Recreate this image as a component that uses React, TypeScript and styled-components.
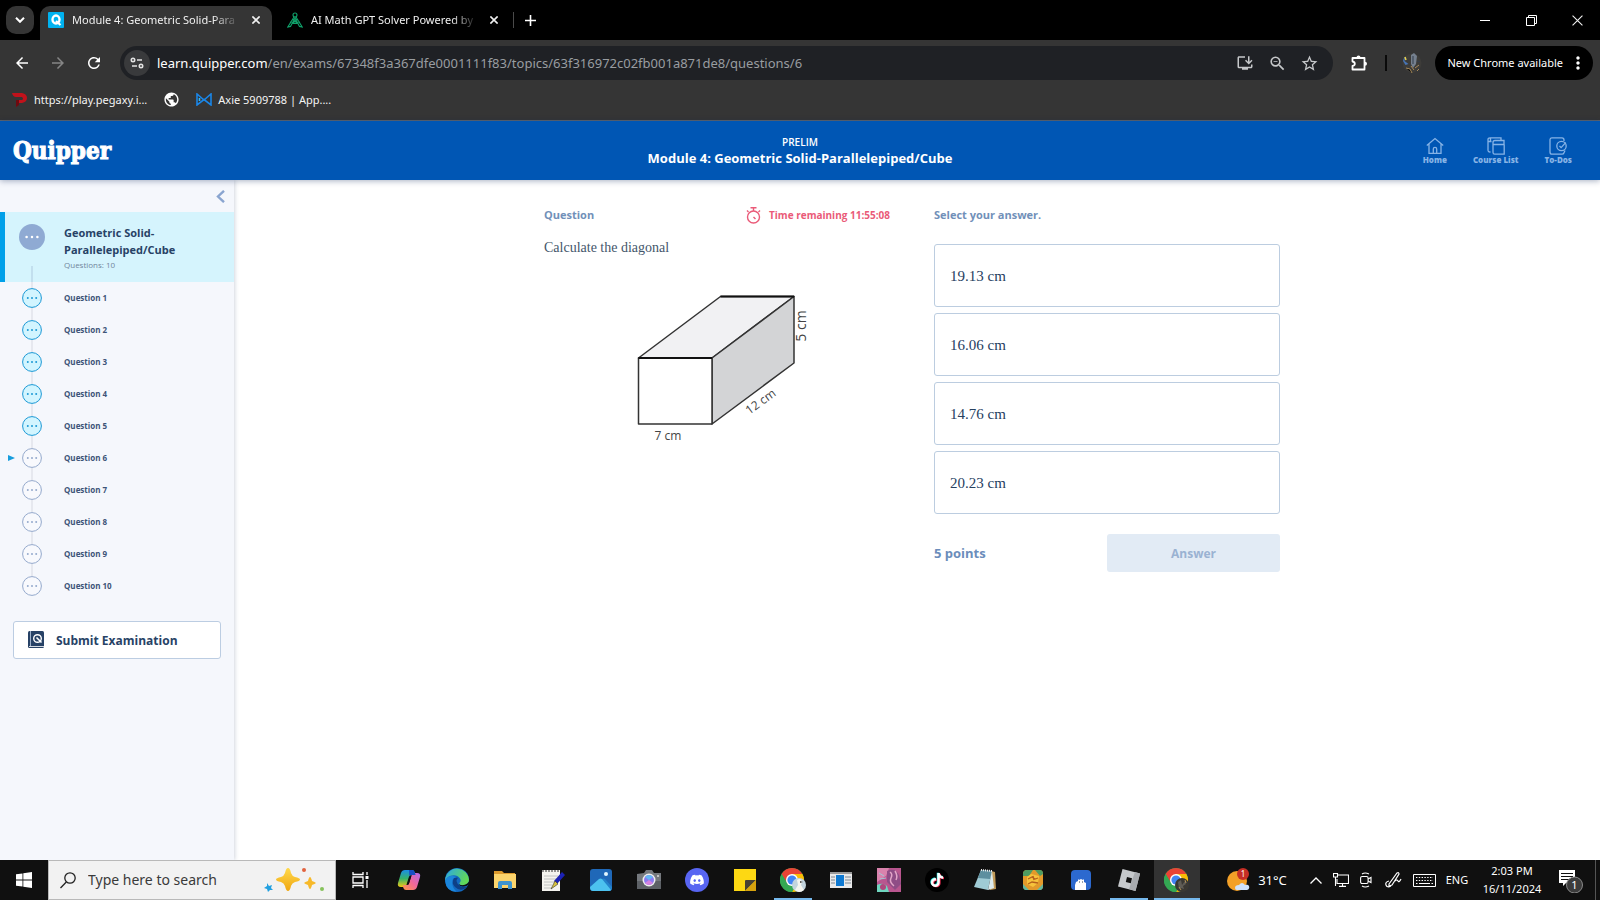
import React from "react";
import styled, { createGlobalStyle } from "styled-components";
import {
  MdArrowBack,
  MdArrowForward,
  MdRefresh,
  MdInstallDesktop,
  MdZoomOut,
  MdStarBorder,
  MdMoreVert,
  MdPublic,
} from "react-icons/md";
import { FaDiscord, FaTiktok } from "react-icons/fa";

const GlobalStyle = createGlobalStyle`
  * { box-sizing: border-box; }
  body { margin: 0; background: #fff; font-family: "Open Sans", "Noto Sans", sans-serif; }
  button, input { font: inherit; color: inherit; }
  button { border: 0; padding: 0; background: none; cursor: pointer; }
  ul, ol { list-style: none; margin: 0; padding: 0; }
  h1, h2, h3, p { margin: 0; }
  a { color: inherit; text-decoration: none; }
  svg { display: block; flex: none; }
`;

const Shell = styled.div`
  min-height: 100vh;
  display: flex;
  flex-direction: column;
`;

/* ---------- browser window ---------- */
const ChromeFont = `"Noto Sans", "Open Sans", sans-serif`;

const TabStrip = styled.div`
  height: 40px;
  padding-left: 6px;
  background: #000;
  color: #f0f0f0;
  font: 11px/16px ${ChromeFont};
  display: flex;
  align-items: center;
`;

const TabSearch = styled.button`
  width: 28px;
  height: 28px;
  margin-right: 6px;
  border-radius: 10px;
  background: #353535;
  display: grid;
  place-items: center;
`;

const Tab = styled.div<{ $active?: boolean }>`
  align-self: flex-end;
  width: ${(p) => (p.$active ? 232 : 241)}px;
  height: 34px;
  padding: 0 ${(p) => (p.$active ? 8 : 11)}px 6px ${(p) => (p.$active ? 8 : 15)}px;
  border-radius: 10px 10px 0 0;
  background: ${(p) => (p.$active ? "#353535" : "transparent")};
  display: flex;
  align-items: center;
  gap: 8px;
`;

const TabTitle = styled.button`
  flex: 1;
  min-width: 0;
  height: 20px;
  white-space: nowrap;
  text-align: left;
  mask-image: linear-gradient(to right, #000 84%, transparent);
`;

const IconButton = styled.button<{ $w?: number }>`
  width: ${(p) => p.$w ?? 16}px;
  height: 28px;
  display: grid;
  place-items: center;
  flex: none;
`;

const StripDivider = styled.span`
  width: 1px;
  height: 16px;
  background: #4a4a4a;
  margin-right: 8px;
`;

const WindowButtons = styled.div`
  margin-left: auto;
  display: flex;
`;

const Toolbar = styled.div`
  height: 46px;
  padding: 0 7px;
  background: #353535;
  color: #fff;
  display: flex;
  align-items: center;
`;

const NavButtons = styled.div`
  display: flex;
  gap: 6px;
  margin-right: 11px;
`;

const UrlBar = styled.form`
  flex: 1;
  height: 34px;
  padding: 0 8px 0 4px;
  border-radius: 17px;
  background: #1f2125;
  display: flex;
  align-items: center;
  font: 13px/20px ${ChromeFont};
`;

const SiteInfo = styled.button`
  width: 26px;
  height: 26px;
  margin-right: 7px;
  border-radius: 50%;
  background: #393a3c;
  display: grid;
  place-items: center;
`;

const UrlPath = styled.input`
  flex: 1;
  min-width: 0;
  padding: 0;
  border: 0;
  outline: 0;
  background: transparent;
  color: #999da1;
`;

const UrlActions = styled.div`
  display: flex;
  color: #c6c8ca;
`;

const ToolDivider = styled.span`
  width: 2px;
  height: 16px;
  margin-right: 15px;
  background: #0a0a0a;
`;

const UpdateChip = styled.button`
  height: 34px;
  margin-left: 13px;
  padding: 0 5px 0 12px;
  border-radius: 17px;
  background: #000;
  font: 11px/16px ${ChromeFont};
  display: flex;
  align-items: center;
  gap: 5px;
`;

const Bookmarks = styled.nav`
  height: 35px;
  padding: 0 12px 7px;
  background: #353535;
  border-bottom: 1px solid #5b6470;
  color: #f4f4f4;
  font: 11px/16px ${ChromeFont};
  display: flex;
  align-items: center;
  gap: 16px;
`;

const Bookmark = styled.a`
  display: flex;
  align-items: center;
  gap: 6px;
`;

/* ---------- course page ---------- */
const Header = styled.header`
  position: relative;
  z-index: 1;
  height: 59px;
  background: #0056b4;
  box-shadow: 0 1px 6px rgba(0, 30, 80, 0.35);
  color: #fff;
  display: grid;
  grid-template-columns: 1fr auto 1fr;
  align-items: center;
`;

const Logo = styled.a`
  padding-left: 13px;
  font: bold 24px/32px "DejaVu Serif Condensed", "DejaVu Serif", serif;
  -webkit-text-stroke: 1px #fff;
`;

const HeaderTitle = styled.div`
  text-align: center;
  p { font-size: 10px; line-height: 16px; font-weight: 600; }
  h1 { font-size: 13px; line-height: 17px; font-weight: 700; }
`;

const HeaderNav = styled.nav`
  justify-self: end;
  padding-right: 28px;
  display: flex;
  gap: 26px;
`;

const HeaderLink = styled.a`
  color: #86b3e6;
  font-size: 8px;
  line-height: 10px;
  font-weight: 800;
  display: flex;
  flex-direction: column;
  align-items: center;
`;

const Page = styled.div`
  flex: 1;
  display: flex;
`;

const Sidebar = styled.aside`
  width: 234px;
  flex: none;
  background: #f5f7fc;
  box-shadow: 1px 0 4px rgba(30, 50, 90, 0.2);
`;

const CollapseRow = styled.div`
  height: 32px;
  padding: 0 6px;
  display: flex;
  justify-content: flex-end;
  align-items: center;
`;

const Topic = styled.div`
  height: 70px;
  padding: 12px 8px 0 14px;
  border-left: 5px solid #00a0e9;
  background: #d5f4fd;
  display: flex;
  gap: 19px;
  h2 { font-size: 11px; line-height: 17px; color: #274266; }
  p { font-size: 8px; line-height: 14px; color: #71869c; }
`;

const TopicMark = styled.div`
  width: 26px;
  display: flex;
  flex-direction: column;
  justify-content: space-between;
  align-items: center;
`;

const Thread = styled.span`
  width: 2px;
  height: 16px;
  background: rgba(120, 140, 180, 0.2);
`;

const QuestionRow = styled.li`
  height: 32px;
  display: grid;
  grid-template-columns: 22px 20px 1fr;
  align-items: start;
`;

const Pointer = styled.span`
  padding: 12px 0 0 8px;
`;

const Step = styled.div<{ $last?: boolean }>`
  height: 32px;
  padding-top: 6px;
  background: linear-gradient(#e6e8ef, #e6e8ef) top center / 2px ${(p) => (p.$last ? "8px" : "100%")} no-repeat;
`;

const QuestionLink = styled.a`
  padding-left: 22px;
  font-size: 8px;
  line-height: 32px;
  font-weight: 700;
  color: #3d5478;
`;

const SubmitButton = styled.button`
  width: calc(100% - 26px);
  height: 38px;
  margin: 19px 13px 0;
  padding-left: 14px;
  border: 1px solid #bccde2;
  border-radius: 3px;
  background: #fff;
  color: #274266;
  font-size: 12px;
  font-weight: 700;
  display: flex;
  align-items: center;
  gap: 12px;
`;

const Main = styled.main`
  flex: 1;
  padding: 23px 10px 0 0;
`;

const Columns = styled.div`
  max-width: 736px;
  margin: 0 auto;
  display: grid;
  grid-template-columns: 1fr 1fr;
  column-gap: 44px;
`;

const PanelHead = styled.div`
  height: 24px;
  display: flex;
  justify-content: space-between;
  align-items: center;
  color: #7190b9;
  h2 { font-size: 11px; line-height: 20px; }
`;

const Timer = styled.div`
  display: flex;
  align-items: center;
  gap: 8px;
  color: #ea5a78;
  font-size: 10px;
  font-weight: 700;
`;

const Prompt = styled.p`
  margin-top: 11px;
  font: 14px/20px "Liberation Serif", serif;
  color: #44566b;
`;

const Figure = styled.svg`
  margin: 30px 0 0 86px;
  font-family: "Open Sans", sans-serif;
`;

const Options = styled.div`
  margin-top: 17px;
  display: flex;
  flex-direction: column;
  gap: 6px;
`;

const Option = styled.button`
  height: 63px;
  padding: 0 15px;
  border: 1px solid #bccde0;
  border-radius: 3px;
  background: #fff;
  color: #26405f;
  text-align: left;
  font: 15px/20px "Liberation Serif", serif;
`;

const AnswerRow = styled.div`
  margin-top: 20px;
  display: grid;
  grid-template-columns: 1fr 1fr;
  align-items: center;
`;

const Points = styled.strong`
  font-size: 13px;
  color: #6b8dbb;
`;

const AnswerButton = styled.button`
  height: 38px;
  border-radius: 3px;
  background: #e2ebf5;
  color: #9ab2d2;
  font-size: 12px;
  font-weight: 700;
`;

/* ---------- desktop taskbar ---------- */
const Taskbar = styled.footer`
  height: 40px;
  background: #101010;
  color: #fff;
  display: flex;
`;

const StartButton = styled.button`
  width: 48px;
  display: grid;
  place-items: center;
`;

const SearchBox = styled.label`
  width: 288px;
  padding: 0 10px 0 11px;
  border: 1px solid #b9b9b9;
  background: #f2f2f2;
  display: flex;
  align-items: center;
  gap: 12px;
  input {
    flex: 1;
    min-width: 0;
    padding: 0;
    border: 0;
    outline: 0;
    background: transparent;
    font: 14px/20px ${ChromeFont};
  }
  input::placeholder { color: #3a3a3a; opacity: 1; }
`;

const Apps = styled.div`
  padding-left: 1px;
  display: flex;
`;

const AppButton = styled.button<{ $open?: boolean; $active?: boolean }>`
  width: 48px;
  display: grid;
  place-items: center;
  background:
    linear-gradient(#76b9ed, #76b9ed) bottom center / ${(p) => (p.$active ? "46px" : p.$open ? "38px" : "0")} 2px no-repeat,
    linear-gradient(#333, #333) center / ${(p) => (p.$active ? "46px" : "0")} 100% no-repeat;
`;

const Tray = styled.div`
  margin-left: auto;
  padding-right: 4px;
  display: flex;
  align-items: center;
  font: 11px/18px ${ChromeFont};
`;

const TrayButton = styled.button<{ $w: number }>`
  width: ${(p) => p.$w}px;
  height: 40px;
  display: flex;
  align-items: center;
  justify-content: center;
  gap: 7px;
`;

const Temperature = styled.span`
  font-size: 13px;
`;

const Clock = styled.time`
  width: 76px;
  text-align: center;
`;

const ShowDesktop = styled.span`
  width: 1px;
  height: 40px;
  margin-left: 5px;
  background: #555;
`;

/* ---------- icons ---------- */
const Cross = ({ size = 8, width = 2 }: { size?: number; width?: number }) => (
  <svg width={size} height={size} viewBox="0 0 10 10" stroke="currentColor" strokeWidth={width}>
    <path d="M.5.5l9 9M9.5.5l-9 9" />
  </svg>
);

const Dots = ({ color, size }: { color: string; size: number }) => (
  <g fill={color}>
    {[-1, 0, 1].map((i) => (
      <circle key={i} cx={i * size * 3} cy="0" r={size * 0.7} />
    ))}
  </g>
);

const ChromeLogo = ({ person }: { person: "light" | "dark" }) => (
  <svg width="26" height="26" viewBox="0 0 26 26">
    <circle cx="12" cy="13" r="12" fill="#34a853" />
    <path d="M1.6 7A12 12 0 0 1 22.4 7H12l-5 9z" fill="#ea4335" />
    <path d="M22.4 7A12 12 0 0 1 12 25l5.2-9L12 7z" fill="#fbbc05" />
    <path d="M1.6 7A12 12 0 0 0 12 25l5-8.5L7 16z" fill="#34a853" />
    <circle cx="12" cy="13" r="6" fill="#fff" />
    <circle cx="12" cy="13" r="4.6" fill="#4285f4" />
    {person === "light" ? (
      <g>
        <circle cx="19" cy="18" r="7" fill="#c3d4dd" />
        <path d="M17 13q4-3 5 2l-1 3 3 5q-5 4-9 0l3-5z" fill="#f5f5ef" />
        <path d="M20 14l3 1-3 1z" fill="#444" />
      </g>
    ) : (
      <g>
        <circle cx="18" cy="18" r="7" fill="#3a3833" />
        <path d="M14 15l3-2 1 5 3-4 1 3-3 2 1 3-3-1-2 1z" fill="#5f5c55" />
        <path d="M15 20l2 3M21 13l1 3" stroke="#b09057" />
      </g>
    )}
  </svg>
);

const taskbarApps: { name: string; open?: boolean; active?: boolean; icon: React.ReactNode }[] = [
  {
    name: "Task View",
    icon: (
      <svg width="18" height="16" viewBox="0 0 18 16" fill="none" stroke="#fff" strokeWidth="1.3">
        <path d="M1 0v2.500h10V0M1 16v-2.500h10V16M1 5h10v6H1zM15 0v3M15 8v8" />
        <path d="M13.500 4h3v3h-3z" fill="#fff" stroke="none" />
      </svg>
    ),
  },
  {
    name: "Copilot",
    icon: (
      <svg width="24" height="24" viewBox="0 0 24 24">
        <defs>
          <linearGradient id="cpA" x1="0" y1="0" x2="0" y2="1">
            <stop stopColor="#1a8fe8" />
            <stop offset=".5" stopColor="#35b36b" />
            <stop offset="1" stopColor="#f2c811" />
          </linearGradient>
          <linearGradient id="cpB" x1="1" y1="0" x2="0" y2="1">
            <stop stopColor="#b06be8" />
            <stop offset=".5" stopColor="#f0679a" />
            <stop offset="1" stopColor="#ff9b44" />
          </linearGradient>
        </defs>
        <path d="M8 2h7q2 0 2.600 2l1 3h-4q-2 0-2.700 2l-2.500 8q-.7 2-2.500 2H4q-4 0-3-4l3-10q1-3 4-3z" fill="url(#cpA)" />
        <path d="M16 22H9q-2 0-2.600-2l-.8-3h4q2 0 2.600-2l2.500-8q.7-2 2.500-2H20q4 0 3 4l-3 10q-1 3-4 3z" fill="url(#cpB)" />
        <path d="M12 2h3q2 0 2.600 2l1 3h-4q-1.600 0-2.300 1.300z" fill="#174fc4" />
        <path d="M12.500 8.500l-2.500 8.500q1.500 0 2-1.500l2.300-7.500z" fill="#101010" />
      </svg>
    ),
  },
  {
    name: "Edge",
    icon: (
      <svg width="24" height="24" viewBox="0 0 24 24">
        <defs>
          <linearGradient id="edA" x1="0" y1="0" x2="1" y2=".4">
            <stop stopColor="#2aa7e8" />
            <stop offset="1" stopColor="#62d957" />
          </linearGradient>
        </defs>
        <circle cx="12" cy="12" r="12" fill="#1268c0" />
        <path d="M.3 10A12 12 0 0 1 24 12q-.5 5-6 5-4 0-3.500-2 2-2 .5-4.500Q12 6.500 7 7.500 2 8 .3 13z" fill="url(#edA)" />
        <path d="M9 10q-3 5 1 9t9 2q2-.8 3.500-2.800Q18 20 15 18t-3.500-5q0-2 1.500-3-2-1.500-4 0z" fill="#0e3f86" />
        <path d="M.3 13Q2 7.500 7.500 8q3 .2 4.500 1.700Q8 9 7.300 13q-.8 6 4.200 10.800Q1 23.500.3 13z" fill="#1b86dc" />
        <path d="M24 15.500q-2 3.500-6.500 3-3-.5-4-2.500 3 2 6.500.8 2.500-.8 4-3z" fill="#101010" />
      </svg>
    ),
  },
  {
    name: "File Explorer",
    icon: (
      <svg width="22" height="20" viewBox="0 0 22 20">
        <path d="M0 1h8l2 2h11v4H0z" fill="#dc9a2d" />
        <path d="M0 4h22v14H0z" fill="#fbd46c" />
        <path d="M4 19v-6q0-2 2-2h10q2 0 2 2v6h-4v-4H8v4z" fill="#3e94cf" />
      </svg>
    ),
  },
  {
    name: "Notes",
    icon: (
      <svg width="24" height="24" viewBox="0 0 24 24">
        <path d="M1 2h18v21H1z" fill="#f4f3ee" />
        <path d="M2 2v2m3-2v2m3-2v2m3-2v2m3-2v2m3-2v2" stroke="#333" />
        <path d="M3 8h14M3 11h14M3 14h12M3 17h8M3 20h8" stroke="#b5b5b5" strokeWidth=".8" />
        <path d="M21 4l3 3-8 9-3-3z" fill="#1b21b4" />
        <path d="M14 13l3 3-7 5z" fill="#d8c23c" stroke="#333" strokeWidth=".6" />
      </svg>
    ),
  },
  {
    name: "Photos",
    icon: (
      <svg width="22" height="22" viewBox="0 0 22 22">
        <rect width="22" height="22" rx="3" fill="#1f68b8" />
        <path d="M5 22l7-12q1.500-1 3 0l7 8q0 4-3 4z" fill="#2383cc" />
        <path d="M0 18l9-8q1.500-1 3 0l9 11q-1 1-2 1H3q-3 0-3-4z" fill="#4cc2ef" />
        <circle cx="16" cy="5" r="2" fill="#e3f6ff" />
      </svg>
    ),
  },
  {
    name: "Camera",
    icon: (
      <svg width="24" height="20" viewBox="0 0 24 20">
        <path d="M7 3l2-3h6l2 3h7v16H0V4z" fill="#75797e" />
        <path d="M0 11h24v8H0z" fill="#5d6166" />
        <circle cx="12" cy="10" r="6.500" fill="#eee" />
        <circle cx="12" cy="10" r="5" fill="#8a7bf0" />
        <path d="M8 7a5 5 0 0 1 8 0l-4 3z" fill="#64b8f5" />
        <path d="M8 13a5 5 0 0 0 8 0l-4-3z" fill="#d583e0" />
        <circle cx="21" cy="6" r="1" fill="#ddd" />
      </svg>
    ),
  },
  {
    name: "Discord",
    icon: (
      <svg width="24" height="24" viewBox="0 0 24 24">
        <circle cx="12" cy="12" r="12" fill="#5865f2" />
        <g color="#fff" transform="translate(4.500 4.500)">
          <FaDiscord size={15} />
        </g>
      </svg>
    ),
  },
  {
    name: "Sticky Notes",
    icon: (
      <svg width="22" height="22" viewBox="0 0 22 22">
        <path d="M0 0h22v22H0z" fill="#fdd813" />
        <path d="M11 22V12q0-1 1-1h10z" fill="#474133" />
        <path d="M11 22L22 11v11z" fill="#d6a20d" />
      </svg>
    ),
  },
  { name: "Chrome", open: true, icon: <ChromeLogo person="light" /> },
  {
    name: "News",
    icon: (
      <svg width="22" height="16" viewBox="0 0 22 16">
        <path d="M0 0h22v16H0z" fill="#e9e9e9" />
        <path d="M0 0h22v2H0z" fill="#999" />
        <path d="M6 3h8v11H6z" fill="#0f79d1" />
        <path d="M1 5h4M1 8h4M1 11h4M15 5h6M15 8h6M15 11h6" stroke="#7d8792" />
      </svg>
    ),
  },
  {
    name: "Art",
    icon: (
      <svg width="24" height="24" viewBox="0 0 24 24">
        <path d="M0 0h24v24H0z" fill="#b9568f" />
        <path d="M0 0h12L9 8 0 14z" fill="#d983ad" />
        <path d="M10 3q8-4 12 4l2 9-6 6-8-8z" fill="#8f4d86" />
        <path d="M13 4q3 2 1 6t3 8M18 3q3 5 1 9" stroke="#e2a5c7" strokeWidth="1.500" fill="none" />
        <path d="M0 17q6-3 10 1l2 6H0z" fill="#6fd6bf" />
        <circle cx="6" cy="19" r="3" fill="#b0477e" />
        <path d="M2 5l5 3M3 11l6-1" stroke="#a1c8d6" />
      </svg>
    ),
  },
  {
    name: "TikTok",
    icon: (
      <svg width="24" height="24" viewBox="0 0 24 24">
        <circle cx="12" cy="12" r="12" fill="#000" />
        <g color="#25f4ee" transform="translate(4.400 4.400)"><FaTiktok size={14} /></g>
        <g color="#fe2c55" transform="translate(5.800 5.600)"><FaTiktok size={14} /></g>
        <g color="#fff" transform="translate(5 5)"><FaTiktok size={14} /></g>
      </svg>
    ),
  },
  {
    name: "Notepad",
    icon: (
      <svg width="24" height="22" viewBox="0 0 24 22">
        <path d="M18 2l4 1 1 17-6 1z" fill="#c09a58" />
        <path d="M8 1l11 1-4 19-14-3z" fill="#9fcbd5" />
        <path d="M8 1l11 1-2 8L5 9z" fill="#5d8f9f" />
        <path d="M19 2l2 17-6 2z" fill="#dcebed" />
        <path d="M8 1l11 1" stroke="#eee" strokeDasharray="1 1" strokeWidth="2" />
      </svg>
    ),
  },
  {
    name: "Game",
    icon: (
      <svg width="20" height="20" viewBox="0 0 20 20">
        <rect width="20" height="20" rx="4" fill="#e29a2b" />
        <path d="M0 4q0-4 4-4h6L6 6H0zM12 0h5q3 0 3 4l-3 2z" fill="#4e9c62" />
        <path d="M4 7l4-3 8 2-1 7-5 4-6-3z" fill="#f6c33c" />
        <path d="M5 9l4-2 3 2 3-1M5 14l4-2 6 1M10 6l1 4" stroke="#b5601c" strokeWidth="1.300" fill="none" />
        <path d="M0 14l6 6H3q-3 0-3-4zM20 14l-6 6h3q3 0 3-4z" fill="#63b7a0" />
      </svg>
    ),
  },
  {
    name: "Penguin",
    icon: (
      <svg width="20" height="20" viewBox="0 0 20 20">
        <rect width="20" height="20" rx="4" fill="#2c69cf" />
        <path d="M4 20v-5l1-3 2-1V9l1 1 2-1 2 1 1-1v3l2 1v7z" fill="#fff" />
        <path d="M8 12h1M11 12h1" stroke="#345" />
      </svg>
    ),
  },
  {
    name: "Roblox",
    open: true,
    icon: (
      <svg width="24" height="24" viewBox="0 0 24 24">
        <path d="M5.500 1L23 5.500 18.500 23 1 18.500z" fill="#c6c9cc" />
        <path d="M18 4l5 1.500L18.500 23 12 21z" fill="#a8abaf" />
        <path d="M10 9l5 1.200-1.200 5-5-1.200z" fill="#101010" />
      </svg>
    ),
  },
  { name: "Chrome window", active: true, icon: <ChromeLogo person="dark" /> },
];

const questions = Array.from({ length: 10 }, (_, i) => i + 1);
const answers = ["19.13 cm", "16.06 cm", "14.76 cm", "20.23 cm"];

export default function App() {
  return (
    <Shell>
      <GlobalStyle />
      <TabStrip>
        <TabSearch aria-label="Search tabs">
          <svg width="10" height="6" viewBox="0 0 10 6" fill="none" stroke="#fff" strokeWidth="2">
            <path d="M1 .8l4 4 4-4" />
          </svg>
        </TabSearch>
        <Tab $active>
          <svg width="16" height="16" viewBox="0 0 16 16">
            <rect width="16" height="16" rx="1" fill="#00b2f0" />
            <ellipse cx="8" cy="7.500" rx="3.500" ry="4" fill="none" stroke="#fff" strokeWidth="2.400" />
            <path d="M8 9l4.500 4" stroke="#fff" strokeWidth="2.200" />
          </svg>
          <TabTitle>Module 4: Geometric Solid-Para</TabTitle>
          <IconButton aria-label="Close tab"><Cross /></IconButton>
        </Tab>
        <Tab>
          <svg width="16" height="16" viewBox="0 0 16 16" fill="none" stroke="#10a26b" strokeWidth="1.100">
            <circle cx="8" cy="3" r="2" />
            <path d="M7 5L.8 15l2.700-.6L8 6l4.500 8.400 2.700.6L9 5M3 10q5 3 10 0M5.500 7.500l5.500 4M10.500 7.500l-5.500 4" />
          </svg>
          <TabTitle>AI Math GPT Solver Powered by</TabTitle>
          <IconButton aria-label="Close tab"><Cross /></IconButton>
        </Tab>
        <StripDivider />
        <IconButton aria-label="New tab">
          <svg width="11" height="11" viewBox="0 0 11 11" stroke="#fff" strokeWidth="1.600"><path d="M5.500 0v11M0 5.500h11" /></svg>
        </IconButton>
        <WindowButtons>
          <IconButton $w={46} aria-label="Minimize">
            <svg width="10" height="10" viewBox="0 0 10 10" stroke="#fff"><path d="M0 5.500h10" /></svg>
          </IconButton>
          <IconButton $w={46} aria-label="Restore">
            <svg width="11" height="11" viewBox="0 0 11 11" fill="none" stroke="#fff"><path d="M.5 2.500h8v8h-8zM2.500 2.500v-2h8v8h-2" /></svg>
          </IconButton>
          <IconButton $w={46} aria-label="Close"><Cross size={11} width={1} /></IconButton>
        </WindowButtons>
      </TabStrip>

      <Toolbar>
        <NavButtons>
          <IconButton $w={30} aria-label="Back"><MdArrowBack size={18} /></IconButton>
          <IconButton $w={30} aria-label="Forward"><MdArrowForward size={18} color="#858585" /></IconButton>
          <IconButton $w={30} aria-label="Reload"><MdRefresh size={18} /></IconButton>
        </NavButtons>
        <UrlBar>
          <SiteInfo type="button" aria-label="Site information">
            <svg width="14" height="12" viewBox="0 0 14 12" fill="none" stroke="#e3e3e3" strokeWidth="1.600">
              <circle cx="3" cy="3" r="1.700" />
              <path d="M7 3h5M2 9h5" />
              <circle cx="11" cy="9" r="1.700" />
            </svg>
          </SiteInfo>
          <span>learn.quipper.com</span>
          <UrlPath aria-label="Address" defaultValue="/en/exams/67348f3a367dfe0001111f83/topics/63f316972c02fb001a871de8/questions/6" />
          <UrlActions>
            <IconButton type="button" $w={32} aria-label="Install"><MdInstallDesktop size={18} /></IconButton>
            <IconButton type="button" $w={32} aria-label="Zoom"><MdZoomOut size={19} /></IconButton>
            <IconButton type="button" $w={32} aria-label="Bookmark"><MdStarBorder size={19} /></IconButton>
          </UrlActions>
        </UrlBar>
        <IconButton $w={52} aria-label="Extensions">
          <svg width="17" height="17" viewBox="0 0 17 17" fill="none" stroke="#fff" strokeWidth="1.800" strokeLinejoin="round">
            <path d="M1.500 3h12v11.500h-12V11q2.300-.3 2.300-2.200T1.500 6.500z" />
            <path d="M5.500 2.500a2 2 0 0 1 4 0zM14 6.800a2 2 0 0 1 0 4z" fill="#fff" stroke="none" />
          </svg>
        </IconButton>
        <ToolDivider />
        <IconButton $w={20} aria-label="Profile">
          <svg width="20" height="20" viewBox="0 0 20 20">
            <circle cx="10" cy="10" r="9.500" fill="#3d3c39" />
            <path d="M9 2l3-2 3 3-1 8-3 4-2-4z" fill="#75808e" />
            <path d="M1 8q1-4 2-4l-.5 4 4 3-3 1z" fill="#4774b5" />
            <path d="M3 4l1 3" stroke="#e9d24c" strokeWidth="1.500" />
            <path d="M4 15l4 1 2 4M13 15l4-3M9 13l3 4M15 18l2-2" stroke="#a98a5a" />
            <path d="M11 3v8M15 8l3 1" stroke="#333c4a" />
          </svg>
        </IconButton>
        <UpdateChip>
          New Chrome available
          <MdMoreVert size={20} />
        </UpdateChip>
      </Toolbar>

      <Bookmarks>
        <Bookmark href="#pegaxy">
          <svg width="16" height="16" viewBox="0 0 16 16">
            <path d="M0 1h10q5 1 5 5t-5 5H7l-3 4V8h6q2-1 0-3H4Q1 5 0 1z" fill="#c0121b" />
            <path d="M4 8h3v5l-3 2z" fill="#6d0a10" />
          </svg>
          https://play.pegaxy.i...
        </Bookmark>
        <Bookmark href="#site" aria-label="Saved site"><MdPublic size={17} color="#fff" /></Bookmark>
        <Bookmark href="#axie">
          <svg width="16" height="13" viewBox="0 0 16 13" fill="none" stroke="#1a86e8" strokeWidth="1.600">
            <path d="M1 12V1l7 6 7-6v11L8 6.500z" />
            <path d="M3.500 8V5" stroke="#35b8f2" />
          </svg>
          Axie 5909788 | App....
        </Bookmark>
      </Bookmarks>

      <Header>
        <Logo href="#quipper">Quipper</Logo>
        <HeaderTitle>
          <p>PRELIM</p>
          <h1>Module 4: Geometric Solid-Parallelepiped/Cube</h1>
        </HeaderTitle>
        <HeaderNav>
          <HeaderLink href="#home">
            <svg width="18" height="18" viewBox="0 0 18 18" fill="none" stroke="currentColor" strokeWidth="1.300">
              <path d="M.8 8.500L9 1.500l8.200 7M3 7v9.300h12V7M7.300 16v-4q0-1.700 1.700-1.700t1.700 1.700v4" />
            </svg>
            Home
          </HeaderLink>
          <HeaderLink href="#courses">
            <svg width="18" height="18" viewBox="0 0 18 18" fill="none" stroke="currentColor" strokeWidth="1.300">
              <path d="M3.500 15H3q-2 0-2-2V2.500Q1 .8 3 .8h11v2.700M1 4.500h3.500M3.500 1v3" />
              <path d="M6 9V5.500q0-2 2-2h9v4H6.500M6 8v7.500q0 1.700 1.700 1.700h9.500V7.500" />
            </svg>
            Course List
          </HeaderLink>
          <HeaderLink href="#todos">
            <svg width="18" height="18" viewBox="0 0 18 18" fill="none" stroke="currentColor" strokeWidth="1.300">
              <path d="M15 4V3q0-2.200-2-2.200H3Q1 .8 1 3v12q0 2.200 2 2.200h10q1.500 0 2-1.500l1-2.200" />
              <circle cx="12.500" cy="9" r="4.700" />
              <path d="M10.500 9l1.600 1.600 4.600-5" />
            </svg>
            To-Dos
          </HeaderLink>
        </HeaderNav>
      </Header>

      <Page>
        <Sidebar>
          <CollapseRow>
            <IconButton aria-label="Collapse sidebar">
              <svg width="9" height="13" viewBox="0 0 9 13" fill="none" stroke="#8aa5d0" strokeWidth="2.400">
                <path d="M8 .8L2 6.500l6 5.700" />
              </svg>
            </IconButton>
          </CollapseRow>
          <Topic>
            <TopicMark>
              <svg width="26" height="26" viewBox="-13 -13 26 26">
                <circle r="13" fill="#8faad3" />
                <Dots color="#fff" size={1.8} />
              </svg>
              <Thread />
            </TopicMark>
            <div>
              <h2>Geometric Solid-<br />Parallelepiped/Cube</h2>
              <p>Questions: 10</p>
            </div>
          </Topic>
          <ol>
            {questions.map((n) => {
              const done = n <= 5;
              return (
                <QuestionRow key={n}>
                  <Pointer>
                    {n === 6 && (
                      <svg width="7" height="8" viewBox="0 0 7 8"><path d="M0 1l7 3-7 3z" fill="#179ddd" /></svg>
                    )}
                  </Pointer>
                  <Step $last={n === 10}>
                    <svg width="20" height="20" viewBox="-10 -10 20 20">
                      <circle r="9.400" fill={done ? "#d2f5ff" : "#f8f9fd"} stroke={done ? "#1b98d5" : "#94a9cc"} strokeWidth="1" />
                      <Dots color={done ? "#1b98d5" : "#94a9cc"} size={1.4} />
                    </svg>
                  </Step>
                  <QuestionLink href={`#question-${n}`}>Question {n}</QuestionLink>
                </QuestionRow>
              );
            })}
          </ol>
          <SubmitButton>
            <svg width="16" height="18" viewBox="0 0 16 18">
              <rect width="16" height="17" rx="1.500" fill="#274266" />
              <path d="M1 15.200h15v.8H1z" fill="#fff" />
              <path d="M2.500 0v15" stroke="#9db0ca" />
              <circle cx="9.500" cy="7.500" r="3.800" fill="none" stroke="#fff" strokeWidth="1.400" />
              <path d="M8.500 6.500l5 5" stroke="#fff" strokeWidth="1.600" />
            </svg>
            Submit Examination
          </SubmitButton>
        </Sidebar>

        <Main>
          <Columns>
            <section>
              <PanelHead>
                <h2>Question</h2>
                <Timer>
                  <svg width="15" height="17" viewBox="0 0 15 17" fill="none" stroke="currentColor" strokeWidth="1.400">
                    <circle cx="7.500" cy="10" r="6" />
                    <path d="M4.500.8h6M7.500 1v3M1 3.500l1.500 1.500M14 3.500L12.500 5M7.500 10l2 2" />
                  </svg>
                  Time remaining 11:55:08
                </Timer>
              </PanelHead>
              <Prompt>Calculate the diagonal</Prompt>
              <Figure width="190" height="160" viewBox="0 0 190 160" role="img" aria-label="Box measuring 7 cm by 5 cm by 12 cm">
                <g stroke="#333" strokeWidth="1.500" strokeLinejoin="round">
                  <path d="M8.500 70l82-61.500h73.500L82 70z" fill="#f1f1f3" />
                  <path d="M82 70L164 8.500V75L82 136z" fill="#d3d4d6" />
                  <path d="M8.500 70H82v66H8.500z" fill="#fff" />
                  <path d="M90.500 8.500H164M8.500 70H82" stroke="#111" strokeWidth="2" />
                </g>
                <g fill="#444" fontSize="12" textAnchor="middle">
                  <text x="38" y="152">7 cm</text>
                  <text transform="translate(133 117) rotate(-36)">12 cm</text>
                  <text transform="translate(176 38) rotate(-90)" fontSize="14">5 cm</text>
                </g>
              </Figure>
            </section>
            <section>
              <PanelHead><h2>Select your answer.</h2></PanelHead>
              <Options>
                {answers.map((a) => (
                  <Option key={a}>{a}</Option>
                ))}
              </Options>
              <AnswerRow>
                <Points>5 points</Points>
                <AnswerButton>Answer</AnswerButton>
              </AnswerRow>
            </section>
          </Columns>
        </Main>
      </Page>

      <Taskbar>
        <StartButton aria-label="Start">
          <svg width="16" height="16" viewBox="0 0 16 16" fill="#fff">
            <path d="M0 2.300l6.500-.9v6.200H0zM7.300 1.300L16 0v7.600H7.300zM0 8.400h6.500v6.200L0 13.700zM7.300 8.400H16V16l-8.700-1.300z" />
          </svg>
        </StartButton>
        <SearchBox>
          <svg width="16" height="17" viewBox="0 0 16 17" fill="none" stroke="#222" strokeWidth="1.300">
            <circle cx="10" cy="6" r="5.200" />
            <path d="M6.300 10L.5 16" />
          </svg>
          <input placeholder="Type here to search" aria-label="Search" />
          <svg width="62" height="26" viewBox="0 0 62 26">
            <defs>
              <linearGradient id="spark" x1="0" y1="0" x2="0" y2="1">
                <stop stopColor="#ffd94b" />
                <stop offset="1" stopColor="#f0a712" />
              </linearGradient>
            </defs>
            <path d="M25 1q2 0 3 5 1 3 4 4 5 1 5 2.500T32 15q-3 1-4 4-1 5-3 5t-3-5q-1-3-4-4-5-1-5-2.500T18 10q3-1 4-4 1-5 3-5z" fill="url(#spark)" />
            <path d="M47 10q1 0 2 4 3 1 4 2-1 1-4 2-1 4-2 4t-2-4q-3-1-4-2 1-1 4-2 1-4 2-4z" fill="#f7b92a" />
            <path d="M4 16l2 3 3-1-1 3 2 2-3 0-2 2-1-3-3-1 3-2z" fill="#22a0e0" />
            <circle cx="41" cy="3" r="2" fill="#e2633f" />
            <circle cx="59" cy="22" r="2" fill="#86c25b" />
          </svg>
        </SearchBox>
        <Apps>
          {taskbarApps.map((app) => (
            <AppButton key={app.name} aria-label={app.name} $open={app.open} $active={app.active}>
              {app.icon}
            </AppButton>
          ))}
        </Apps>
        <Tray>
          <TrayButton $w={92}>
            <svg width="24" height="24" viewBox="0 0 24 24">
              <circle cx="10" cy="13" r="10" fill="#f3a027" />
              <path d="M10 22h10q3-1 2-4-1-2-4-1-3-4-6 0-4 0-4 3 0 2 2 2z" fill="#cfe2fb" />
              <circle cx="16" cy="6" r="6" fill="#c62f25" />
              <text x="16" y="9" fontSize="8" fill="#fff" textAnchor="middle">1</text>
            </svg>
            <Temperature>31°C</Temperature>
          </TrayButton>
          <TrayButton $w={26} aria-label="Show hidden icons">
            <svg width="12" height="7" viewBox="0 0 12 7" fill="none" stroke="#fff" strokeWidth="1.300"><path d="M.5 6.500L6 1l5.500 5.500" /></svg>
          </TrayButton>
          <TrayButton $w={24} aria-label="Network">
            <svg width="16" height="14" viewBox="0 0 16 14" fill="none" stroke="#fff" strokeWidth="1.100">
              <path d="M5 2h10.500v8.500H4V6M9.500 10.500v2.500M6 13.400h7M.5.500h4v3.500h-4zM2.500 4v9" />
            </svg>
          </TrayButton>
          <TrayButton $w={25} aria-label="Meet now">
            <svg width="12" height="16" viewBox="0 0 12 16" fill="none" stroke="#fff" strokeWidth="1.100">
              <rect x=".6" y="4.500" width="7.500" height="7" rx="1.500" />
              <path d="M8 7l3-1.500v5L8 9M2 2q3-2 7 0M2 14q3 2 7 0" />
            </svg>
          </TrayButton>
          <TrayButton $w={30} aria-label="Pen">
            <svg width="17" height="16" viewBox="0 0 17 16" fill="none" stroke="#fff" strokeWidth="1.200">
              <path d="M4 12L12 1q2-1 2 1L7 13l-3 1zM4 9Q0 10 1 13t5 1M10 9q2-2 3 0t3-2" />
            </svg>
          </TrayButton>
          <TrayButton $w={32} aria-label="Touch keyboard">
            <svg width="23" height="13" viewBox="0 0 23 13" fill="none" stroke="#fff">
              <path d="M.5.500h22v12H.5z" />
              <path d="M3 3.500h17M3 6.500h17" strokeDasharray="1.400 1.400" />
              <path d="M3 9.500h1.500M6 9.500h11M18.500 9.500H20" />
            </svg>
          </TrayButton>
          <TrayButton $w={34}>ENG</TrayButton>
          <Clock>2:03 PM<br />16/11/2024</Clock>
          <TrayButton $w={40} aria-label="Notifications, 1 new">
            <svg width="26" height="26" viewBox="0 0 26 26">
              <path d="M2 3h16v13H9l-3 3v-3H2z" fill="#fff" />
              <path d="M4 6.500h12M4 9.500h12M4 12.500h8" stroke="#101010" />
              <circle cx="17.500" cy="18" r="8" fill="#3c3c3c" stroke="#8a8a8a" />
              <text x="17.500" y="22" fontSize="11" fill="#fff" textAnchor="middle">1</text>
            </svg>
          </TrayButton>
          <ShowDesktop />
        </Tray>
      </Taskbar>
    </Shell>
  );
}
